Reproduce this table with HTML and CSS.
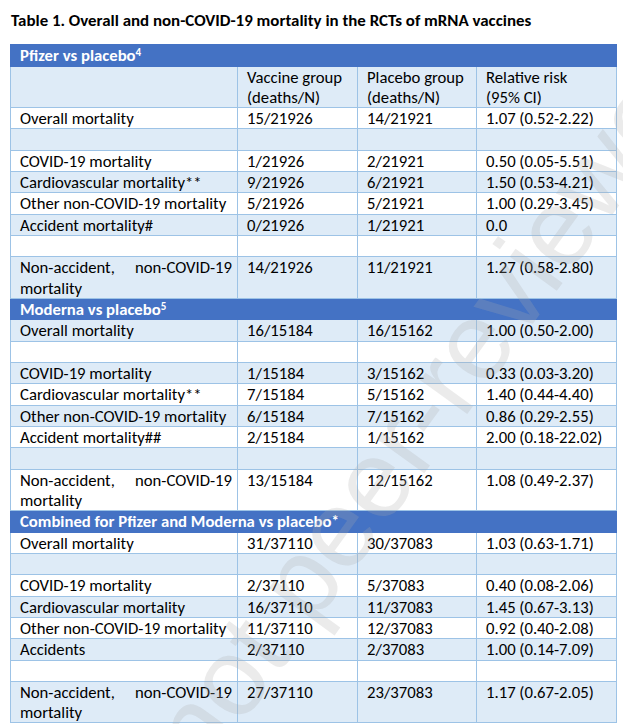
FILE: index.html
```html
<!DOCTYPE html>
<html>
<head>
<meta charset="utf-8">
<link rel="stylesheet" href="styles.css">
</head>
<body>
<div class="page">
  <h1 class="title">Table 1. Overall and non-COVID-19 mortality in the RCTs of mRNA vaccines</h1>
  <table class="mort">
    <colgroup>
      <col class="c1"><col class="c2"><col class="c3"><col class="c4">
    </colgroup>
    <tbody>
      <tr class="sec"><td colspan="4">Pfizer vs placebo<sup>4</sup></td></tr>
      <tr class="sh"><td></td><td>Vaccine group<br>(deaths/N)</td><td>Placebo group<br>(deaths/N)</td><td>Relative risk<br>(95% CI)</td></tr>
      <tr><td>Overall mortality</td><td>15/21926</td><td>14/21921</td><td>1.07 (0.52-2.22)</td></tr>
      <tr class="sh"><td></td><td></td><td></td><td></td></tr>
      <tr><td>COVID-19 mortality</td><td>1/21926</td><td>2/21921</td><td>0.50 (0.05-5.51)</td></tr>
      <tr class="sh"><td>Cardiovascular mortality**</td><td>9/21926</td><td>6/21921</td><td>1.50 (0.53-4.21)</td></tr>
      <tr><td>Other non-COVID-19 mortality</td><td>5/21926</td><td>5/21921</td><td>1.00 (0.29-3.45)</td></tr>
      <tr class="sh"><td>Accident mortality#</td><td>0/21926</td><td>1/21921</td><td>0.0</td></tr>
      <tr><td></td><td></td><td></td><td></td></tr>
      <tr class="sh"><td class="just">Non-accident, non-COVID-19 mortality</td><td>14/21926</td><td>11/21921</td><td>1.27 (0.58-2.80)</td></tr>

      <tr class="sec"><td colspan="4">Moderna vs placebo<sup>5</sup></td></tr>
      <tr class="sh"><td>Overall mortality</td><td>16/15184</td><td>16/15162</td><td>1.00 (0.50-2.00)</td></tr>
      <tr><td></td><td></td><td></td><td></td></tr>
      <tr class="sh"><td>COVID-19 mortality</td><td>1/15184</td><td>3/15162</td><td>0.33 (0.03-3.20)</td></tr>
      <tr><td>Cardiovascular mortality**</td><td>7/15184</td><td>5/15162</td><td>1.40 (0.44-4.40)</td></tr>
      <tr class="sh"><td>Other non-COVID-19 mortality</td><td>6/15184</td><td>7/15162</td><td>0.86 (0.29-2.55)</td></tr>
      <tr><td>Accident mortality##</td><td>2/15184</td><td>1/15162</td><td>2.00 (0.18-22.02)</td></tr>
      <tr class="sh"><td></td><td></td><td></td><td></td></tr>
      <tr><td class="just">Non-accident, non-COVID-19 mortality</td><td>13/15184</td><td>12/15162</td><td>1.08 (0.49-2.37)</td></tr>

      <tr class="sec"><td colspan="4">Combined for Pfizer and Moderna vs placebo<sup class="ast">*</sup></td></tr>
      <tr><td>Overall mortality</td><td>31/37110</td><td>30/37083</td><td>1.03 (0.63-1.71)</td></tr>
      <tr class="sh"><td></td><td></td><td></td><td></td></tr>
      <tr><td>COVID-19 mortality</td><td>2/37110</td><td>5/37083</td><td>0.40 (0.08-2.06)</td></tr>
      <tr class="sh"><td>Cardiovascular mortality</td><td>16/37110</td><td>11/37083</td><td>1.45 (0.67-3.13)</td></tr>
      <tr><td>Other non-COVID-19 mortality</td><td>11/37110</td><td>12/37083</td><td>0.92 (0.40-2.08)</td></tr>
      <tr class="sh"><td>Accidents</td><td>2/37110</td><td>2/37083</td><td>1.00 (0.14-7.09)</td></tr>
      <tr><td></td><td></td><td></td><td></td></tr>
      <tr class="sh"><td class="just">Non-accident, non-COVID-19 mortality</td><td>27/37110</td><td>23/37083</td><td>1.17 (0.67-2.05)</td></tr>
    </tbody>
  </table>
  <div class="watermark">not peer-reviewed</div>
</div>
</body>
</html>
```

FILE: styles.css
```css
html, body {
  margin: 0;
  padding: 0;
  background: #ffffff;
}
body {
  font-family: "Carlito", "Lato", "Liberation Sans", sans-serif;
  color: #000;
  overflow: hidden;
}
.page {
  position: relative;
  width: 623px;
  height: 724px;
  overflow: hidden;
  padding: 10px 0 0 10px;
  box-sizing: border-box;
}
.title {
  margin: 0 0 0 1px;
  font-size: 16.9px;
  font-weight: bold;
  line-height: 21px;
  height: 34px;
  white-space: nowrap;
}
.mort {
  border-collapse: collapse;
  table-layout: fixed;
  width: 607px;
  font-size: 16.7px;
}
.c1 { width: 227px; }
.c2 { width: 120px; }
.c3 { width: 119px; }
.c4 { width: 140px; }
.mort td {
  border: 1px solid #9dc3e6;
  padding: 0 5px 0 9px;
  line-height: 20.3px;
  vertical-align: top;
  white-space: nowrap;
  background: #ffffff;
}
.mort td:empty::before {
  content: "\00a0";
}
.mort tr.sh td {
  background: #deebf7;
}
.mort td.just {
  white-space: normal;
  text-align: justify;
  text-align-last: left;
}
.mort tr.sec td {
  background: #4472c4;
  border-color: #4472c4;
  color: #ffffff;
  font-weight: bold;
  line-height: 20.6px;
}
.mort sup {
  font-size: 11px;
  line-height: 0;
  vertical-align: 5px;
}
.mort sup.ast {
  font-size: 15px;
  vertical-align: 1px;
}
.watermark {
  position: absolute;
  left: 432px;
  top: 398px;
  font-family: "Liberation Sans", sans-serif;
  font-size: 110px;
  line-height: 1;
  white-space: nowrap;
  color: rgba(170, 170, 170, 0.24);
  transform: translate(-50%, -50%) rotate(-54deg);
  pointer-events: none;
}
```
